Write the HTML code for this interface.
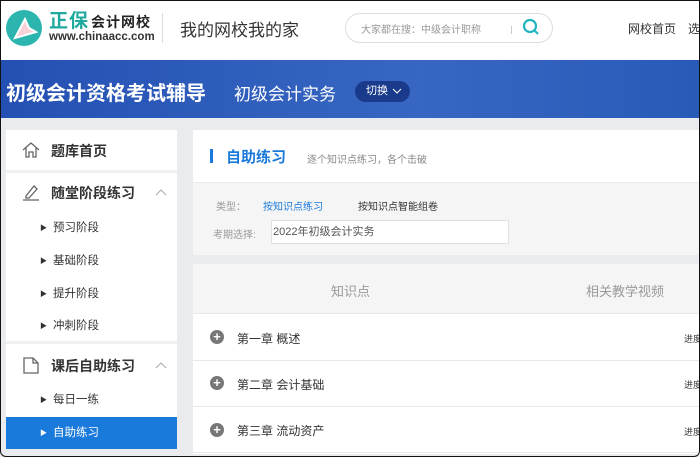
<!DOCTYPE html>
<html><head><meta charset="utf-8"><style>
*{margin:0;padding:0;box-sizing:border-box}
body{width:700px;height:457px;overflow:hidden;background:#e9ebee;font-family:"Liberation Sans","Noto Sans CJK SC",sans-serif;position:relative;color:#333}
.a{position:absolute;white-space:nowrap}
.frame{position:absolute;left:0;top:0;width:700px;height:457px;border:1px solid #111;border-radius:0 0 6px 6px;pointer-events:none}
.sub{font-size:11.5px;color:#333;line-height:16px}
.sub span{font-size:7px;margin-right:6px;vertical-align:1px}
.plus{width:14px;height:14px;border-radius:50%;background:#777;color:#fff;font-size:13px;line-height:14px;text-align:center;font-weight:bold}
</style></head><body>
<div class="a" style="left:0;top:0;width:700px;height:60px;background:#fff"></div>
<div class="a" style="left:6px;top:10px;width:36px;height:36px;border-radius:50%;background:#2bb5ae"></div>
<svg class="a" style="left:12px;top:16px" width="26" height="24"><path d="M3 22 L13 3 L17 12 L24 16 Z" fill="#f8d0d8" stroke="#fff" stroke-width="2"/></svg>
<div class="a" style="left:49px;top:6px;font-size:19px;font-weight:bold;color:#20a99f;letter-spacing:1px">正保<span style="font-size:14px;color:#222;margin-left:2px">会计网校</span></div>
<div class="a" style="left:49px;top:31px;font-size:11.5px;font-weight:bold;color:#333">www.chinaacc.com</div>
<div class="a" style="left:162px;top:13px;width:1px;height:30px;background:#ddd"></div>
<div class="a" style="left:180px;top:16px;font-size:17px;color:#333">我的网校我的家</div>
<div class="a" style="left:345px;top:13px;width:208px;height:30px;border:1px solid #ddd;border-radius:15px"></div>
<div class="a" style="left:361px;top:21px;font-size:10px;color:#999">大家都在搜：中级会计职称</div>
<div class="a" style="left:511px;top:26px;width:1px;height:8px;background:#ccc"></div>
<svg class="a" style="left:522px;top:18px" width="18" height="18"><circle cx="8" cy="8" r="6" fill="none" stroke="#20b5c0" stroke-width="2.2"/><path d="M12.5 12.5 L16 16" stroke="#20b5c0" stroke-width="2.2"/></svg>
<div class="a" style="left:628px;top:20px;font-size:12px;color:#333">网校首页</div>
<div class="a" style="left:688px;top:20px;font-size:12px;color:#333">选</div>
<div class="a" style="left:0;top:60px;width:700px;height:58px;background:linear-gradient(90deg,#2450b3,#3160bd 40%,#3767c2 60%,#2a5ab8)"></div>
<div class="a" style="left:6px;top:77px;font-size:20px;font-weight:bold;color:#fff">初级会计资格考试辅导</div>
<div class="a" style="left:234px;top:80px;font-size:17px;color:#fff">初级会计实务</div>
<div class="a" style="left:355px;top:81px;width:55px;height:21px;border-radius:11px;background:#1a3a8c;color:#fff;font-size:11px;line-height:21px;padding-left:11px">切换</div>
<svg class="a" style="left:392px;top:88px" width="10" height="7"><path d="M1 1 L5 5 L9 1" fill="none" stroke="#fff" stroke-width="1"/></svg>
<!-- sidebar -->
<div class="a" style="left:6px;top:130px;width:171px;height:319px;background:#fff"></div>
<div class="a" style="left:6px;top:170px;width:171px;height:3px;background:#eef0f2"></div>
<div class="a" style="left:6px;top:341px;width:171px;height:3px;background:#eef0f2"></div>
<svg class="a" style="left:21px;top:141px" width="20" height="18"><path d="M2 9 L10 2 L18 9 M5 7 V16 H8 V11 H12 V16 H15 V7" fill="none" stroke="#666" stroke-width="1.3"/></svg>
<div class="a" style="left:51px;top:141px;font-size:14px;font-weight:bold;color:#333">题库首页</div>
<svg class="a" style="left:21px;top:182px" width="20" height="20"><path d="M5 14 L13 4 L16 7 L8 16 L5 16Z" fill="none" stroke="#666" stroke-width="1.3"/><path d="M2 18 H18" stroke="#666" stroke-width="1.3"/></svg>
<div class="a" style="left:51px;top:183px;font-size:14px;font-weight:bold;color:#333">随堂阶段练习</div>
<svg class="a" style="left:155px;top:189px" width="12" height="7"><path d="M1 6 L6 1 L11 6" fill="none" stroke="#aaa" stroke-width="1"/></svg>
<div class="a sub" style="left:40px;top:220px"><span>▶</span>预习阶段</div>
<div class="a sub" style="left:40px;top:253px"><span>▶</span>基础阶段</div>
<div class="a sub" style="left:40px;top:286px"><span>▶</span>提升阶段</div>
<div class="a sub" style="left:40px;top:318px"><span>▶</span>冲刺阶段</div>
<svg class="a" style="left:21px;top:355px" width="20" height="20"><path d="M3 3 H12 L17 8 V18 H3Z M12 3 V8 H17" fill="none" stroke="#666" stroke-width="1.3"/></svg>
<div class="a" style="left:51px;top:356px;font-size:14px;font-weight:bold;color:#333">课后自助练习</div>
<svg class="a" style="left:155px;top:362px" width="12" height="7"><path d="M1 6 L6 1 L11 6" fill="none" stroke="#aaa" stroke-width="1"/></svg>
<div class="a sub" style="left:40px;top:392px"><span>▶</span>每日一练</div>
<div class="a" style="left:6px;top:417px;width:171px;height:32px;background:#1a7adb"></div>
<div class="a sub" style="left:40px;top:425px;color:#fff"><span>▶</span>自助练习</div>
<!-- main -->
<div class="a" style="left:193px;top:130px;width:507px;height:52px;background:#fff"></div>
<div class="a" style="left:210px;top:149px;width:3px;height:14px;background:#1a7adb"></div>
<div class="a" style="left:226px;top:146px;font-size:15px;font-weight:bold;color:#1a7adb">自助练习</div>
<div class="a" style="left:307px;top:151px;font-size:10px;color:#888">逐个知识点练习，各个击破</div>
<div class="a" style="left:193px;top:182px;width:507px;height:73px;background:#f5f5f5;border-top:1px solid #eaeaea"></div>
<div class="a" style="left:216px;top:198px;font-size:10px;color:#999">类型：</div>
<div class="a" style="left:263px;top:198px;font-size:10px;color:#1a7adb">按知识点练习</div>
<div class="a" style="left:358px;top:198px;font-size:10px;color:#333">按知识点智能组卷</div>
<div class="a" style="left:213px;top:226px;font-size:10px;color:#999">考期选择:</div>
<div class="a" style="left:271px;top:220px;width:238px;height:24px;background:#fff;border:1px solid #e0e0e0;font-size:11px;color:#555;line-height:22px;padding-left:1px">2022年初级会计实务</div>
<div class="a" style="left:193px;top:264px;width:507px;height:50px;background:#f5f5f5;border-bottom:1px solid #e8e8e8"></div>
<div class="a" style="left:331px;top:281px;font-size:13px;color:#999">知识点</div>
<div class="a" style="left:586px;top:281px;font-size:13px;color:#999">相关教学视频</div>
<div class="a" style="left:193px;top:314px;width:507px;height:140px;background:#fff"></div>
<div class="a" style="left:193px;top:360px;width:507px;height:1px;background:#e8e8e8"></div>
<div class="a" style="left:193px;top:406px;width:507px;height:1px;background:#e8e8e8"></div>
<div class="a" style="left:193px;top:452px;width:507px;height:1px;background:#e8e8e8"></div>
<div class="a plus" style="left:210px;top:330px">+</div>
<div class="a" style="left:237px;top:330px;font-size:12px;color:#333">第一章 概述</div>
<div class="a" style="left:684px;top:332px;font-size:9px;color:#333">进度</div>
<div class="a plus" style="left:210px;top:376px">+</div>
<div class="a" style="left:237px;top:376px;font-size:12px;color:#333">第二章 会计基础</div>
<div class="a" style="left:684px;top:378px;font-size:9px;color:#333">进度</div>
<div class="a plus" style="left:210px;top:423px">+</div>
<div class="a" style="left:237px;top:422px;font-size:12px;color:#333">第三章 流动资产</div>
<div class="a" style="left:684px;top:425px;font-size:9px;color:#333">进度</div>
<div class="frame"></div>
</body></html>
